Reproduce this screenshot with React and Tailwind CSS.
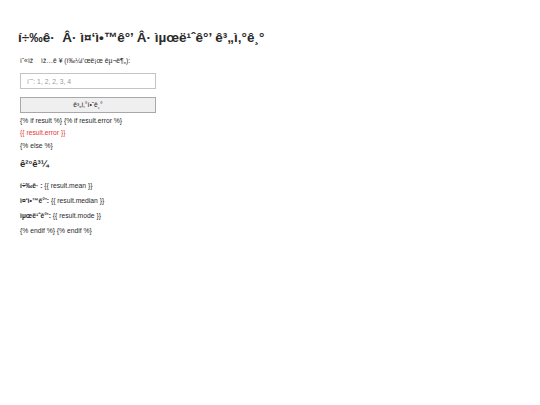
import React from "react";

export default function App() {
  return (
    <div className="min-h-[405px] bg-white px-[20px] pt-[28px] font-['Liberation_Sans',Arial,sans-serif] text-[#2a2a2a]">
      <h1 className="text-[13.5px] font-bold leading-[20px] -ml-[2px]">
        {"í÷‰ê·\u00A0 Â· ì¤\u2018ì•™ê°\u2019 Â· ìµœë¹ˆê°\u2019 ê³„ì\u201A°ê¸°"}
      </h1>

      <label className="mt-[8px] block text-[6.75px] leading-[10px]">
        {"ìˆ«ìž\u0090 ìž…ë\u00A0¥ (ì‰¼í\u2018œë¡œ êµ¬ë¶„):"}
      </label>
      <input
        type="text"
        placeholder={"ì˜ˆ: 1, 2, 2, 3, 4"}
        className="mt-[7px] block h-[16px] w-[136px] border border-[#c4c4c4] px-[6px] text-[6.75px] outline-none placeholder:text-[#999]"
      />
      <button className="mt-[8px] block h-[16px] w-[136px] border border-[#a8a8a8] bg-[#efefef] text-[6.75px] text-[#2a2a2a]">
        {"ê³„ì\u201A°í•˜ê¸°"}
      </button>

      <p className="mt-[3px] text-[6.75px] leading-[10px]">
        {"{% if result %} {% if result.error %}"}
      </p>
      <p className="mt-[2px] text-[6.75px] leading-[10px] text-[#e53935]">
        {"{{ result.error }}"}
      </p>
      <p className="mt-[3px] text-[6.75px] leading-[10px]">{"{% else %}"}</p>

      <h2 className="mt-[6px] text-[9.5px] font-bold leading-[14px]">{"ê²°ê³¼"}</h2>

      <p className="mt-[10px] text-[6.75px] leading-[10px]">
        <strong>{"í÷‰ê·\u00A0:"}</strong> {"{{ result.mean }}"}
      </p>
      <p className="mt-[5px] text-[6.75px] leading-[10px]">
        <strong>{"ì¤\u2018ì•™ê°\u2019:"}</strong> {"{{ result.median }}"}
      </p>
      <p className="mt-[5px] text-[6.75px] leading-[10px]">
        <strong>{"ìµœë¹ˆê°\u2019:"}</strong> {"{{ result.mode }}"}
      </p>
      <p className="mt-[5px] text-[6.75px] leading-[10px]">
        {"{% endif %} {% endif %}"}
      </p>
    </div>
  );
}
